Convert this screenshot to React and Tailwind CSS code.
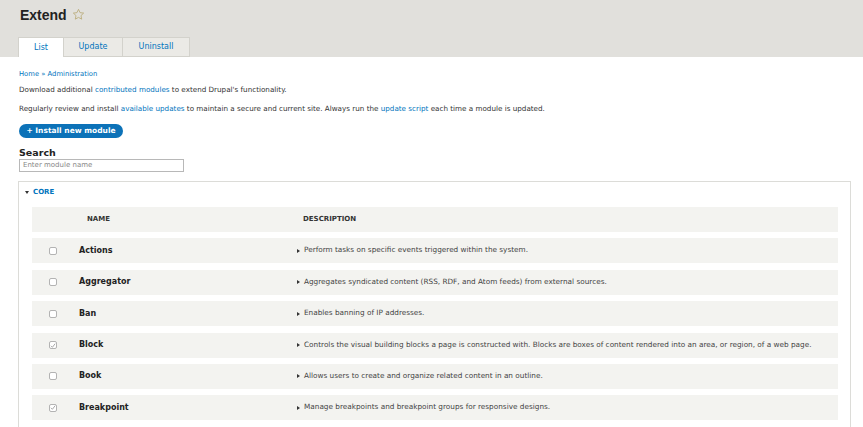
const modules = [
  { name: "Actions", checked: false, desc: "Perform tasks on specific events triggered within the system." },
  { name: "Aggregator", checked: false, desc: "Aggregates syndicated content (RSS, RDF, and Atom feeds) from external sources." },
  { name: "Ban", checked: false, desc: "Enables banning of IP addresses." },
  { name: "Block", checked: true, desc: "Controls the visual building blocks a page is constructed with. Blocks are boxes of content rendered into an area, or region, of a web page." },
  { name: "Book", checked: false, desc: "Allows users to create and organize related content in an outline." },
  { name: "Breakpoint", checked: true, desc: "Manage breakpoints and breakpoint groups for responsive designs." },
];

function Star() {
  return (
    <svg width="13" height="13" viewBox="0 0 24 24" fill="none" stroke="#b9ac7a" strokeWidth="1.6" strokeLinejoin="round">
      <path d="M12 2.5l2.9 6.1 6.6.8-4.9 4.6 1.3 6.6L12 17.3l-5.9 3.3 1.3-6.6-4.9-4.6 6.6-.8z" />
    </svg>
  );
}

function Check({ checked }) {
  return (
    <span className="w-[8px] h-[8px] rounded-[2px] border border-[#b3b3b3] bg-white flex items-center justify-center">
      {checked && (
        <svg width="7" height="7" viewBox="0 0 10 10" fill="none" stroke="#9a9a9a" strokeWidth="1.4">
          <path d="M1.5 5.5l2.5 2.5 4.5-6" />
        </svg>
      )}
    </span>
  );
}

function Caret() {
  return <span className="inline-block w-0 h-0 border-y-[2.5px] border-y-transparent border-l-[3px] border-l-[#333] mr-[4px]" />;
}

export default function App() {
  return (
    <div className="w-[863px] h-[427px] overflow-hidden bg-white text-[#333]" style={{ fontFamily: '"DejaVu Sans", "Liberation Sans", sans-serif' }}>
      {/* Header */}
      <div className="bg-[#e1e0dc] h-[57px] pl-[18px] flex flex-col">
        <div className="flex items-center gap-[5px] pl-[2px] h-[29px]">
          <h1 className="text-[14px] font-bold text-[#222] leading-[18px]" style={{ fontFamily: '"Liberation Sans", sans-serif' }}>Extend</h1>
          <Star />
        </div>
        <div className="flex mt-[8px] text-[8px] text-[#0074bd]">
          <div className="w-[46px] h-[20px] bg-white border border-[#d3d2cc] border-b-0 flex items-center justify-center">List</div>
          <div className="w-[59px] h-[20px] bg-[#ebeae6] border border-l-0 border-[#d3d2cc] flex items-center justify-center">Update</div>
          <div className="w-[67px] h-[20px] bg-[#ebeae6] border border-l-0 border-[#d3d2cc] flex items-center justify-center">Uninstall</div>
        </div>
      </div>

      {/* Content */}
      <div className="pl-[19px] pt-[12px] text-[7.2px]">
        <div className="text-[#0074bd] text-[6.8px] h-[10px] leading-[10px]">Home » Administration</div>
        <p className="mt-[6px] leading-[10px]">
          Download additional <span className="text-[#0074bd]">contributed modules</span> to extend Drupal's functionality.
        </p>
        <p className="mt-[9px] leading-[10px]">
          Regularly review and install <span className="text-[#0074bd]">available updates</span> to maintain a secure and current site. Always run the <span className="text-[#0074bd]">update script</span> each time a module is updated.
        </p>
        <div className="mt-[10px] w-[104px] h-[14px] rounded-full bg-[#0c72b8] text-white font-bold text-[7.5px] flex items-center justify-center">
          + Install new module
        </div>
        <div className="mt-[9px] font-bold text-[9.5px] text-[#222] leading-[12px]">Search</div>
        <div className="w-[165px] h-[13px] border border-[#b8b8b8] flex items-center pl-[3px] text-[#888] text-[7px]">
          Enter module name
        </div>
      </div>

      {/* Fieldset */}
      <div className="ml-[18px] mt-[9px] w-[833px] border border-[#dcdcd8] pl-[13px] pr-[12px] pb-[20px]">
        <div className="h-[17px] pt-[4px] -ml-[7px] flex items-center text-[#0074bd] font-bold text-[7px]">
          <span className="inline-block w-0 h-0 border-x-[2.5px] border-x-transparent border-t-[3px] border-t-[#333] mr-[4px]" />
          CORE
        </div>
        <div className="mt-[8px] flex flex-col gap-[6.4px]">
          <div className="h-[25px] bg-[#f3f3f0] flex items-center text-[7px] font-bold text-[#333]">
            <div className="w-[55px]" />
            <div className="w-[216px]">NAME</div>
            <div>DESCRIPTION</div>
          </div>
          {modules.map((m) => (
            <div key={m.name} className="h-[25px] bg-[#f3f3f0] flex items-center">
              <div className="w-[47px] pl-[17px]">
                <Check checked={m.checked} />
              </div>
              <div className="w-[218px] font-bold text-[8px] text-[#222]">{m.name}</div>
              <div className="flex items-center text-[7.3px] text-[#444]">
                <Caret />
                {m.desc}
              </div>
            </div>
          ))}
          <div className="h-[25px] bg-[#f3f3f0]" />
        </div>
      </div>
    </div>
  );
}
